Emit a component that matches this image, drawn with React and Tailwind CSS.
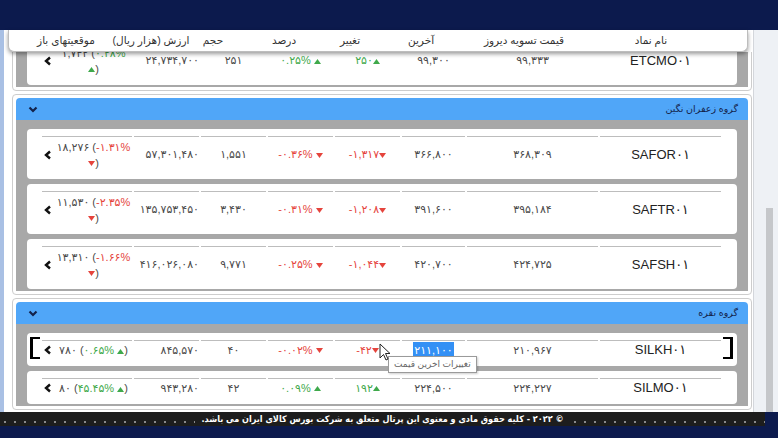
import React from 'react';

const font = { fontFamily: '"Liberation Sans", "DejaVu Sans", sans-serif' };
const footFont = { fontFamily: '"DejaVu Sans Condensed", "DejaVu Sans", sans-serif' };

const GREEN = 'text-[#3fa94b]';
const RED = 'text-[#e5443c]';

function Tri({ up }) {
  return up ? (
    <svg width="7" height="5" viewBox="0 0 7 5" className="inline-block align-middle">
      <path d="M0 5 L3.5 0 L7 5 Z" fill="#3fa94b" />
    </svg>
  ) : (
    <svg width="7" height="5" viewBox="0 0 7 5" className="inline-block align-middle">
      <path d="M0 0 L7 0 L3.5 5 Z" fill="#e5443c" />
    </svg>
  );
}

const headers = [
  ['موقعیتهای باز', 'w-[90px]'],
  ['ارزش (هزار ریال)', 'w-[80px]'],
  ['حجم', 'w-[44px]'],
  ['درصد', 'w-[98px]'],
  ['تغییر', 'w-[34px]'],
  ['آخرین', 'w-[108px]'],
  ['قیمت تسویه دیروز', 'w-[98px]'],
  ['نام نماد', 'w-[156px]'],
];

// first group is scrolled mostly out of view, only its last row shows
const groups = [
  {
    id: 'g1',
    name: '',
    rows: [
      { sym: 'ETCMO۰۱', settle: '۹۹,۳۳۳', last: '۹۹,۳۰۰', chg: '۲۵۰', pct: '۰.۲۵%', up: true, vol: '۲۵۱', val: '۲۴,۷۳۴,۷۰۰', opn: '۱,۷۳۲', opp: '۰.۲۸%', opUp: true, wrap: true },
    ],
  },
  {
    id: 'g2',
    name: 'گروه زعفران نگین',
    rows: [
      { sym: 'SAFOR۰۱', settle: '۳۶۸,۳۰۹', last: '۳۶۶,۸۰۰', chg: '-۱,۳۱۷', pct: '-۰.۳۶%', up: false, vol: '۱,۵۵۱', val: '۵۷,۳۰۱,۴۸۰', opn: '۱۸,۲۷۶', opp: '-۱.۳۱%', opUp: false, wrap: true },
      { sym: 'SAFTR۰۱', settle: '۳۹۵,۱۸۴', last: '۳۹۱,۶۰۰', chg: '-۱,۲۰۸', pct: '-۰.۳۱%', up: false, vol: '۳,۴۳۰', val: '۱۳۵,۷۵۳,۴۵۰', opn: '۱۱,۵۳۰', opp: '-۲.۳۵%', opUp: false, wrap: true },
      { sym: 'SAFSH۰۱', settle: '۴۲۴,۷۲۵', last: '۴۲۰,۷۰۰', chg: '-۱,۰۴۴', pct: '-۰.۲۵%', up: false, vol: '۹,۷۷۱', val: '۴۱۶,۰۲۶,۰۸۰', opn: '۱۳,۳۱۰', opp: '-۱.۶۶%', opUp: false, wrap: true },
    ],
  },
  {
    id: 'g3',
    name: 'گروه نقره',
    rows: [
      { sym: 'SILKH۰۱', settle: '۲۱۰,۹۶۷', last: '۲۱۱,۱۰۰', chg: '-۴۲', pct: '-۰.۰۲%', up: false, vol: '۴۰', val: '۸۴۵,۵۷۰', opn: '۷۸۰', opp: '۰.۶۵%', opUp: true, focus: true },
      { sym: 'SILMO۰۱', settle: '۲۲۴,۲۲۷', last: '۲۲۴,۵۰۰', chg: '۱۹۲', pct: '۰.۰۹%', up: true, vol: '۴۲', val: '۹۴۳,۲۸۰', opn: '۸۰', opp: '۴۵.۴۵%', opUp: true },
    ],
  },
];

function Cell({ w, h, children, className = '' }) {
  return (
    <div className={`${w} ${h} border-t border-[#bdbdbd] flex items-center justify-center text-[11px] text-[#4a4a4a] whitespace-nowrap ${className}`}>
      {children}
    </div>
  );
}

function Row({ r }) {
  const h = r.wrap ? 'h-[36px]' : 'h-[19px]';
  const col = r.up ? GREEN : RED;
  const opCol = r.opUp ? GREEN : RED;
  return (
    <div className="relative bg-white rounded-[4px] pt-[7px] pb-[7px] px-[15px] flex gap-[2px]">
      {r.focus && (
        <>
          <div className="absolute left-[3px] top-[4px] w-[10px] h-[22px] border-l-[3px] border-t-[2px] border-b-[2px] border-black" />
          <div className="absolute right-[4px] top-[4px] w-[10px] h-[22px] border-r-[3px] border-t-[2px] border-b-[2px] border-black" />
        </>
      )}
      <Cell w="w-[90px]" h={h} className="justify-start">
        <svg width="12" height="10" viewBox="0 0 12 10" className="shrink-0 ml-[1px]">
          <polyline points="7,1.5 3,5 7,8.5" fill="none" stroke="#111" strokeWidth="2.4" />
        </svg>
        <div dir="ltr" className="flex-1 text-center leading-[16px]">
          {r.wrap ? (
            <>
              <div>
                {r.opn} (<span className={opCol}>{r.opp}</span>
              </div>
              <div>
                <Tri up={r.opUp} />)
              </div>
            </>
          ) : (
            <div>
              {r.opn} (<span className={opCol}>{r.opp} <Tri up={r.opUp} /></span>)
            </div>
          )}
        </div>
      </Cell>
      <Cell w="w-[65px]" h={h} className="justify-end">{r.val}</Cell>
      <Cell w="w-[65px]" h={h}>{r.vol}</Cell>
      <Cell w="w-[65px]" h={h}>
        <span dir="ltr" className={col}>
          {r.pct} <Tri up={r.up} />
        </span>
      </Cell>
      <Cell w="w-[65px]" h={h}>
        <span dir="ltr" className={col}>
          {r.chg}
          <Tri up={r.up} />
        </span>
      </Cell>
      <Cell w="w-[63px]" h={h}>
        {r.focus ? <span className="bg-[#3390f5] text-white px-[1px]">{r.last}</span> : r.last}
      </Cell>
      <Cell w="w-[131px]" h={h}>{r.settle}</Cell>
      <Cell w="w-[121px]" h={h} className="text-[13px] text-[#222]">
        <span dir="ltr">{r.sym}</span>
      </Cell>
    </div>
  );
}

function Group({ g }) {
  return (
    <div className="bg-white border border-[#cdcdcd] rounded-[4px] p-[3px]">
      <div className="h-[22px] bg-[#50a6f8] rounded-t-[4px] flex items-center justify-between pl-[12px] pr-[10px]">
        <svg width="10" height="7" viewBox="0 0 10 7">
          <polyline points="1.5,1.5 5,5 8.5,1.5" fill="none" stroke="#13224a" strokeWidth="2.2" />
        </svg>
        {g.name && <span dir="rtl" className="text-[9.5px] text-[#13224a]">{g.name}</span>}
      </div>
      <div className="bg-[#a8a8a8] pt-[9px] pb-[2px] px-[11px] flex flex-col gap-[5px]">
        {g.rows.map(r => (
          <Row key={r.sym} r={r} />
        ))}
      </div>
    </div>
  );
}

export default function App() {
  return (
    <div style={font} className="relative w-[778px] h-[438px] bg-[#0c1a4d] flex flex-col overflow-hidden">
      <div className="h-[30px] shrink-0" />
      <div className="h-[382px] shrink-0 flex">
        <div className="w-[4px] bg-[#a9c0e4]" />
        <div className="w-[749px] bg-white flex flex-col">
          <div className="relative z-10 ml-[4px] w-[740px] h-[22px] shrink-0 bg-white border border-t-0 border-[#bdbdbd] rounded-b-[6px] shadow-[0_2px_4px_rgba(0,0,0,0.4)] flex items-center pl-[12px]">
            {headers.map(([t, w]) => (
              <div key={t} dir="rtl" className={`${w} text-center text-[10.5px] text-[#333] whitespace-nowrap`}>
                {t}
              </div>
            ))}
          </div>
          <div className="flex-1 overflow-hidden">
            <div className="-mt-[52px] ml-[8px] w-[740px] flex flex-col gap-[3px]">
              {groups.map(g => (
                <Group key={g.id} g={g} />
              ))}
            </div>
          </div>
        </div>
        <div className="w-[25px] bg-[#eef1f5] border-l border-[#d3d6db] pt-[178px]">
          <div className="ml-[12px] w-[7px] h-full bg-[#c5c7ca]" />
        </div>
      </div>
      <div className="h-[14px] shrink-0 w-[765px] bg-[#1d1d1d] bg-[radial-gradient(circle,#8a8a8a_0.8px,transparent_1.2px)] bg-[length:10px_14px] bg-[position:0_3px] flex items-center justify-center">
        <span dir="rtl" style={footFont} className="bg-[#1d1d1d] px-[6px] text-[9px] font-bold text-white leading-[14px]">
          © ۲۰۲۲ - کلیه حقوق مادی و معنوی این پرتال متعلق به شرکت بورس کالای ایران می باشد.
        </span>
      </div>

      <div className="absolute left-[388px] top-[356px] bg-white border border-[#9a9a9a] px-[5px] h-[17px] flex items-center shadow-[1px_1px_2px_rgba(0,0,0,0.2)]">
        <span dir="rtl" className="text-[9px] text-[#666] whitespace-nowrap">تغییرات اخرین قیمت</span>
      </div>
      <svg className="absolute left-[379px] top-[343px]" width="13" height="19" viewBox="0 0 13 19">
        <path d="M1 1 L1 15 L4.5 11.5 L7 17 L9 16 L6.5 10.5 L11 10.5 Z" fill="white" stroke="#222" strokeWidth="1" strokeLinejoin="round" />
      </svg>
    </div>
  );
}
